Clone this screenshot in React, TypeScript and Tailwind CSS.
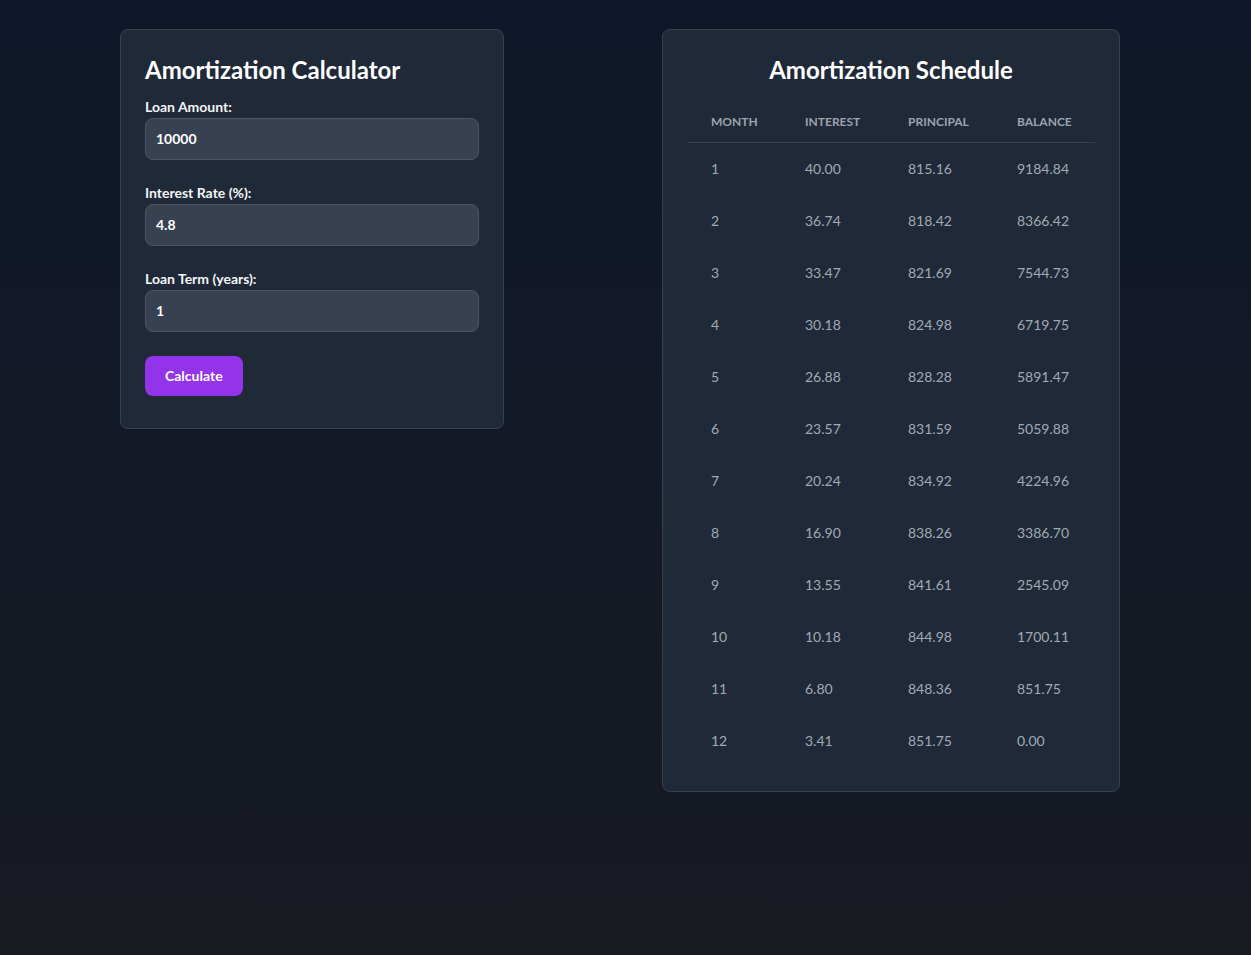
import React from "react";

const rows = [
  [1, "40.00", "815.16", "9184.84"],
  [2, "36.74", "818.42", "8366.42"],
  [3, "33.47", "821.69", "7544.73"],
  [4, "30.18", "824.98", "6719.75"],
  [5, "26.88", "828.28", "5891.47"],
  [6, "23.57", "831.59", "5059.88"],
  [7, "20.24", "834.92", "4224.96"],
  [8, "16.90", "838.26", "3386.70"],
  [9, "13.55", "841.61", "2545.09"],
  [10, "10.18", "844.98", "1700.11"],
  [11, "6.80", "848.36", "851.75"],
  [12, "3.41", "851.75", "0.00"],
];

function Field({ label, value }: { label: string; value: string }) {
  return (
    <div className="mb-5">
      <label className="block text-sm leading-5 font-bold text-gray-100 pt-[3px] mb-[1px]">{label}</label>
      <input
        readOnly
        value={value}
        className="w-full bg-[#374151] border border-[#4b5563] rounded-lg px-2.5 py-2.5 text-sm font-bold text-white outline-none"
      />
    </div>
  );
}

export default function App() {
  return (
    <div
      className="min-h-[955px] w-full bg-gradient-to-b from-[#0f172a] to-[#171a21] text-white"
      style={{ fontFamily: 'Lato, "Noto Sans", sans-serif' }}
    >
      <div className="flex items-start gap-[158px] pl-[120px] pt-[29px]">
        <div className="w-[384px] bg-[#1f2937] border border-[#374151] rounded-lg px-6 pt-6 pb-[32px]">
          <h1 className="text-2xl font-bold mb-2 leading-8">Amortization Calculator</h1>
          <Field label="Loan Amount:" value="10000" />
          <Field label="Interest Rate (%):" value="4.8" />
          <Field label="Loan Term (years):" value="1" />
          <button className="mt-1 bg-[#9333ea] text-white text-sm font-bold px-5 py-2.5 rounded-lg">
            Calculate
          </button>
        </div>
        <div className="w-[458px] bg-[#1f2937] border border-[#374151] rounded-lg p-6">
          <h2 className="text-2xl font-bold mb-4 leading-8 text-center">Amortization Schedule</h2>
          <table className="w-[408px] table-fixed border-collapse">
            <colgroup>
              <col className="w-[94px]" />
              <col className="w-[103px]" />
              <col className="w-[109px]" />
              <col className="w-[102px]" />
            </colgroup>
            <thead>
              <tr className="border-b border-[#374151]">
                {["Month", "Interest", "Principal", "Balance"].map((h) => (
                  <th
                    key={h}
                    className="px-6 py-3 text-left text-xs font-bold uppercase text-[#9ca3af] leading-4"
                  >
                    {h}
                  </th>
                ))}
              </tr>
            </thead>
            <tbody>
              {rows.map((r) => (
                <tr key={r[0]}>
                  {r.map((c, i) => (
                    <td key={i} className="px-6 py-4 text-sm text-[#a1a9b5] leading-5 whitespace-nowrap">
                      {c}
                    </td>
                  ))}
                </tr>
              ))}
            </tbody>
          </table>
        </div>
      </div>
    </div>
  );
}
